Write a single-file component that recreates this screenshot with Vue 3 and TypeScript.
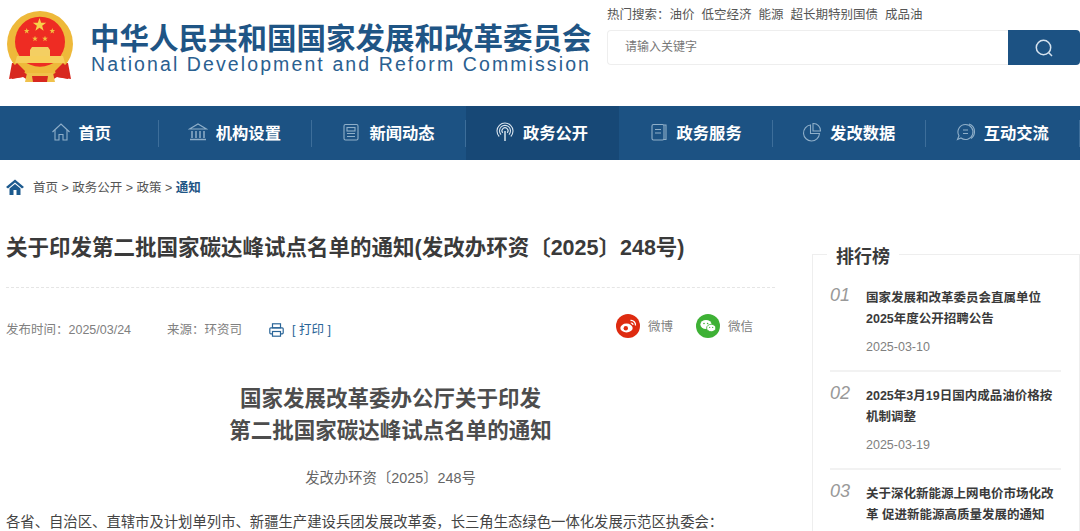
<script setup lang="ts">
const hotWords = ['油价', '低空经济', '能源', '超长期特别国债', '成品油'];

const navItems = [
  { key: 'home', label: '首页' },
  { key: 'org', label: '机构设置' },
  { key: 'news', label: '新闻动态' },
  { key: 'open', label: '政务公开', active: true },
  { key: 'service', label: '政务服务' },
  { key: 'data', label: '发改数据' },
  { key: 'chat', label: '互动交流' },
];

const ranks = [
  { no: '01', title: '国家发展和改革委员会直属单位2025年度公开招聘公告', date: '2025-03-10' },
  { no: '02', title: '2025年3月19日国内成品油价格按机制调整', date: '2025-03-19' },
  { no: '03', title: '关于深化新能源上网电价市场化改革 促进新能源高质量发展的通知', date: '' },
];

function star(cx: number, cy: number, r: number, rot = 0): string {
  const pts: string[] = [];
  for (let i = 0; i < 10; i++) {
    const rad = i % 2 === 0 ? r : r * 0.4;
    const a = ((-90 + rot + i * 36) * Math.PI) / 180;
    pts.push(`${(cx + rad * Math.cos(a)).toFixed(2)},${(cy + rad * Math.sin(a)).toFixed(2)}`);
  }
  return pts.join(' ');
}
</script>

<template>
  <div class="page">
    <header class="header">
      <div class="brand">
        <svg class="emblem" width="74" height="74" viewBox="0 0 74 74">
          <path d="M9 52 L6 68 L20 66 L28 71 L46 71 L54 66 L68 68 L65 52 Z" fill="#d8281f" />
          <circle cx="37" cy="33" r="33" fill="#eeb93a" />
          <circle cx="37" cy="30.7" r="25" fill="#ee2c23" />
          <polygon :points="star(36.5, 14, 7)" fill="#f7d24a" />
          <polygon :points="star(23.7, 20, 3)" fill="#f2c040" />
          <polygon :points="star(49.3, 20, 3)" fill="#f2c040" />
          <polygon :points="star(32, 27.7, 3)" fill="#f2c040" />
          <polygon :points="star(42, 27.7, 3)" fill="#f2c040" />
          <path d="M29 36 L45 36 L47 39 L27 39 Z" fill="#f4cf62" />
          <rect x="27" y="39" width="20" height="6" fill="#f4cf62" />
          <path d="M14 45 L60 45 L62 52 L12 52 Z" fill="#f6cf5c" />
          <path d="M8 58 L14 52 L22 60 L20 66 L9 68 Z" fill="#d8281f" />
          <path d="M66 58 L60 52 L52 60 L54 66 L65 68 Z" fill="#d8281f" />
          <path d="M24 62 L50 62 L52 71 L22 71 Z" fill="#f0c14a" />
          <path d="M29 65 L45 65 L44 71 L30 71 Z" fill="#d8281f" />
        </svg>
        <div class="brand-text">
          <div class="brand-cn">中华人民共和国国家发展和改革委员会</div>
          <div class="brand-en">National Development and Reform Commission</div>
        </div>
      </div>
      <div class="search-area">
        <div class="hot">
          <span>热门搜索：</span>
          <a v-for="w in hotWords" :key="w">{{ w }}</a>
        </div>
        <div class="search">
          <div class="search-input">请输入关键字</div>
          <div class="search-btn">
            <svg width="20" height="20" viewBox="0 0 20 20" fill="none" stroke="#d5e2ee" stroke-width="1.5">
              <circle cx="9.5" cy="9.5" r="7.2" />
              <path d="M14.8 14.8 L18 18" />
            </svg>
          </div>
        </div>
      </div>
    </header>

    <nav class="nav">
      <div v-for="item in navItems" :key="item.key" class="nav-item" :class="{ active: item.active }">
        <svg class="nav-icon" width="20" height="20" viewBox="0 0 20 20" fill="none" stroke="#8fafc9" stroke-width="1.1">
          <template v-if="item.key === 'home'">
            <path d="M1.5 10 L10 2 L18.5 10" />
            <path d="M4 8 V18 H8 V12.5 H12 V18 H16 V8" />
          </template>
          <template v-else-if="item.key === 'org'">
            <path d="M1.5 7 L10 2 L18.5 7 Z" />
            <path d="M4 9 V16 M8 9 V16 M12 9 V16 M16 9 V16" stroke-width="1.5" />
            <path d="M2 17.5 H18" stroke-width="1.5" />
          </template>
          <template v-else-if="item.key === 'news'">
            <rect x="3" y="2.5" width="14" height="15.5" rx="1.5" />
            <rect x="6" y="5.5" width="8" height="3.5" />
            <path d="M6 11.5 H14 M6 14.5 H14" />
          </template>
          <template v-else-if="item.key === 'open'">
            <g stroke="#d9e4ee">
              <path d="M4.2 14.5 A8 8 0 1 1 15.8 14.5" />
              <path d="M6 12.6 A5.5 5.5 0 1 1 14 12.6" />
              <path d="M7.8 10.8 A3 3 0 1 1 12.2 10.8" />
              <path d="M10 9 V19" stroke-width="1.5" />
            </g>
          </template>
          <template v-else-if="item.key === 'service'">
            <path d="M15 3 H17 V17.5 H15" />
            <rect x="3" y="2.5" width="12" height="15.5" rx="1.5" />
            <path d="M6 7.5 H12 M6 11 H12" />
          </template>
          <template v-else-if="item.key === 'data'">
            <path d="M8.5 3 A8 8 0 1 0 17.5 11.5 H8.5 Z" />
            <path d="M11 1.5 A7 7 0 0 1 18.5 9 H11 Z" />
          </template>
          <template v-else>
            <path d="M9.5 2.5 A7.5 7.5 0 1 1 5 16 L1.5 17.5 L3 13.8 A7.5 7.5 0 0 1 9.5 2.5 Z" />
            <path d="M13 2 A8 8 0 0 1 18.5 10 A8 8 0 0 1 15 16.5" />
            <path d="M7 8 H12 M7 11.5 H12" />
          </template>
        </svg>
        <span>{{ item.label }}</span>
      </div>
    </nav>

    <div class="crumb">
      <svg width="18" height="16" viewBox="0 0 18 16">
        <path d="M9 0.5 L18 8 L16 9.5 L9 3.5 L2 9.5 L0 8 Z" fill="#1c5a8e" />
        <path d="M3.5 9.5 L9 5 L14.5 9.5 V16 H10.5 V11 H7.5 V16 H3.5 Z" fill="#1c5a8e" />
      </svg>
      <span class="crumb-text">首页 &gt; 政务公开 &gt; 政策 &gt; <b>通知</b></span>
    </div>

    <div class="main">
      <article class="article">
        <h1 class="title">关于印发第二批国家碳达峰试点名单的通知(发改办环资〔2025〕248号)</h1>
        <div class="meta">
          <span class="meta-date">发布时间：2025/03/24</span>
          <span class="meta-source">来源：环资司</span>
          <span class="print">
            <svg class="print-icon" width="15" height="14" viewBox="0 0 15 14" fill="none" stroke="#2a6598" stroke-width="1.2">
              <rect x="3.5" y="0.8" width="8" height="4" />
              <rect x="0.8" y="4.8" width="13.4" height="6" rx="1" />
              <rect x="3.5" y="8.5" width="8" height="4.7" fill="#fff" />
            </svg>
            <span>[ 打印 ]</span>
          </span>
          <span class="share">
            <span class="share-item">
              <svg width="24" height="24" viewBox="0 0 24 24">
                <circle cx="12" cy="12" r="12" fill="#de2b10" />
                <ellipse cx="10.5" cy="14" rx="6.2" ry="4.4" fill="#fff" />
                <circle cx="9.8" cy="14.2" r="2.2" fill="#de2b10" />
                <path d="M14.5 6.5 A4.5 4.5 0 0 1 19.5 11.5" fill="none" stroke="#fff" stroke-width="1.3" />
                <path d="M14.8 9 A2 2 0 0 1 17 11" fill="none" stroke="#fff" stroke-width="1.1" />
              </svg>
              <span>微博</span>
            </span>
            <span class="share-item">
              <svg width="24" height="24" viewBox="0 0 24 24">
                <circle cx="12" cy="12" r="12" fill="#3eb135" />
                <ellipse cx="10" cy="10.5" rx="5.6" ry="4.6" fill="#fff" />
                <ellipse cx="15.2" cy="14" rx="4.6" ry="3.7" fill="#fff" stroke="#3eb135" stroke-width="0.8" />
                <circle cx="8" cy="9.5" r="0.8" fill="#3eb135" />
                <circle cx="11.6" cy="9.5" r="0.8" fill="#3eb135" />
                <circle cx="13.7" cy="13.4" r="0.6" fill="#3eb135" />
                <circle cx="16.7" cy="13.4" r="0.6" fill="#3eb135" />
              </svg>
              <span>微信</span>
            </span>
          </span>
        </div>
        <h2 class="doc-title">国家发展改革委办公厅关于印发<br />第二批国家碳达峰试点名单的通知</h2>
        <p class="doc-no">发改办环资〔2025〕248号</p>
        <p class="doc-body">各省、自治区、直辖市及计划单列市、新疆生产建设兵团发展改革委，长三角生态绿色一体化发展示范区执委会：</p>
      </article>

      <aside class="rank">
        <h3 class="rank-head">排行榜</h3>
        <div v-for="r in ranks" :key="r.no" class="rank-item">
          <div class="rank-no">{{ r.no }}</div>
          <div class="rank-body">
            <div class="rank-title">{{ r.title }}</div>
            <div v-if="r.date" class="rank-date">{{ r.date }}</div>
          </div>
        </div>
      </aside>
    </div>
  </div>
</template>

<style>
html, body { margin: 0; height: 100%; overflow: hidden; background: #fff; }
</style>

<style scoped>
.page {
  width: 1080px;
  height: 531px;
  overflow: hidden;
  font-family: "Liberation Sans", "Noto Sans CJK SC", sans-serif;
  color: #333;
}

/* Header */
.header {
  height: 106px;
  display: flex;
  justify-content: space-between;
}
.brand { display: flex; padding: 10px 0 0 3px; }
.emblem { flex-shrink: 0; margin-right: 13px; margin-top: 1px; }
.brand-text { width: 499px; padding-top: 11px; }
.brand-cn {
  font-size: 29.5px;
  line-height: 36px;
  font-weight: 700;
  color: #1f5585;
  white-space: nowrap;
}
.brand-en {
  font-size: 19.5px;
  line-height: 22px;
  color: #2a6090;
  letter-spacing: 2.1px;
  white-space: nowrap;
  margin-top: -4px;
  margin-left: 1px;
}

.search-area { width: 473px; padding-top: 7px; }
.hot { display: flex; font-size: 12.5px; line-height: 17px; color: #555; white-space: nowrap; }
.hot a { margin-right: 7px; }
.search {
  display: flex;
  height: 35px;
  margin-top: 6px;
  box-sizing: border-box;
}
.search-input {
  flex: 1;
  border: 1px solid #eee;
  border-right: none;
  border-radius: 4px 0 0 4px;
  padding-left: 17px;
  font-size: 12px;
  line-height: 33px;
  color: #777;
}
.search-btn {
  width: 72px;
  background: #1c5283;
  border-radius: 0 4px 4px 0;
  display: flex;
  align-items: center;
  justify-content: center;
}

/* Nav */
.nav {
  height: 54px;
  background: #1c5283;
  box-sizing: border-box;
  display: flex;
  padding-left: 5px;
}
.nav-item {
  width: 153.7px;
  box-sizing: border-box;
  padding: 0 2px 2px 0;
  display: flex;
  align-items: center;
  justify-content: center;
  gap: 8px;
  position: relative;
  font-size: 16.3px;
  font-weight: 700;
  color: #fff;
  white-space: nowrap;
}
.nav-item::after {
  content: "";
  position: absolute;
  right: 0;
  top: 14px;
  height: 27px;
  width: 1px;
  background: #3d6e9a;
}
.nav-item.active { background: #174876; }
.nav-item.active::after { display: none; }
.nav-icon { flex-shrink: 0; }

/* Breadcrumb */
.crumb {
  display: flex;
  align-items: center;
  gap: 9px;
  padding: 18px 0 0 6px;
  height: 17px;
  font-size: 12.5px;
  color: #555;
}
.crumb b { font-weight: 700; color: #1f5585; }

/* Main */
.main {
  display: flex;
  justify-content: space-between;
  margin-top: 36px;
}
.article { width: 769px; margin-left: 6px; }
.title {
  margin: 0;
  font-size: 21.5px;
  line-height: 34px;
  font-weight: 700;
  color: #3a3a3a;
  white-space: nowrap;
  padding-bottom: 22px;
  border-bottom: 1px dashed #e5e5e5;
}
.meta {
  display: flex;
  align-items: center;
  margin-top: 28px;
  height: 24px;
  font-size: 12.5px;
  color: #808080;
}
.meta-date { width: 161px; }
.meta-source { width: 102px; }
.print { display: flex; align-items: center; gap: 8px; color: #2a6598; font-size: 12.5px; padding-top: 1px; }
.print-icon { margin-top: 2px; }
.share { display: flex; gap: 23px; margin-left: auto; margin-right: 22px; margin-top: -5px; }
.share-item { display: flex; align-items: center; gap: 8px; font-size: 12.5px; }
.doc-title {
  margin: 43px 0 0;
  text-align: center;
  font-size: 21.5px;
  line-height: 32px;
  font-weight: 700;
  color: #4d4d4d;
  width: 769px;
}
.doc-no {
  margin: 21px 0 0;
  text-align: center;
  font-size: 14.35px;
  line-height: 20px;
  color: #666;
}
.doc-body {
  margin: 24px 0 0;
  font-size: 14.35px;
  line-height: 20px;
  color: #444;
  white-space: nowrap;
}

/* Ranking */
.rank {
  width: 268px;
  box-sizing: border-box;
  margin-top: 23px;
  padding: 29px 18px 0 17px;
  border: 1px solid #eee;
  position: relative;
  height: 300px;
}
.rank-head {
  position: absolute;
  left: 14px;
  top: -10px;
  margin: 0;
  padding: 0 9px;
  background: #fff;
  font-size: 18px;
  line-height: 24px;
  font-weight: 700;
  color: #3a3a3a;
}
.rank-item {
  display: flex;
  height: 78px;
  padding: 14px 0 4px;
  border-bottom: 2px solid #f2f2f2;
}
.rank-head + .rank-item { padding-top: 4px; }
.rank-no {
  width: 36px;
  flex-shrink: 0;
  font-size: 18px;
  line-height: 20px;
  font-style: italic;
  color: #999;
  margin-top: -3px;
}
.rank-title {
  font-size: 12.5px;
  line-height: 21px;
  font-weight: 700;
  color: #3a3a3a;
}
.rank-date {
  font-size: 12.5px;
  line-height: 16px;
  color: #808080;
  margin-top: 9px;
}
</style>
